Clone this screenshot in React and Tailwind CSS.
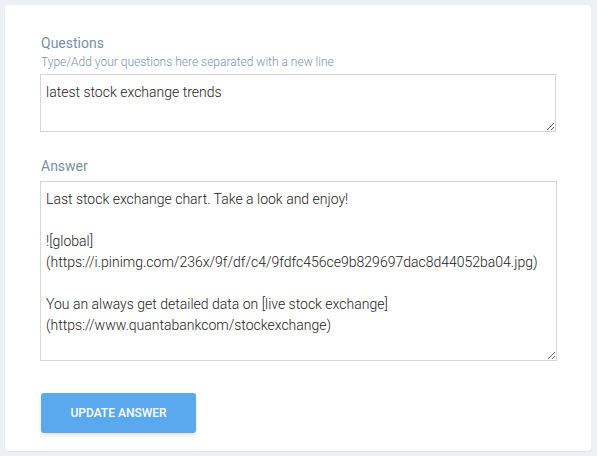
import React from "react";

export default function App() {
  const answer =
    "Last stock exchange chart. Take a look and enjoy!\n\n![global]\n(https://i.pinimg.com/236x/9f/df/c4/9fdfc456ce9b829697dac8d44052ba04.jpg)\n\nYou an always get detailed data on [live stock exchange]\n(https://www.quantabankcom/stockexchange)";
  return (
    <div className="min-h-screen bg-[#eef0f4] p-[5px] font-['Roboto',sans-serif]">
      <div className="w-[586px] h-[446px] bg-white rounded-[4px] shadow-[0_1px_2px_rgba(0,0,0,0.06)] pl-[35px] pt-[30px] flex flex-col">
        <label className="text-[14px] leading-[16px] font-normal text-[#7890a6] ml-[1px]">Questions</label>
        <div className="mt-[3px] text-[12px] leading-[16px] font-light text-[#7b93a9] ml-[1px]">
          Type/Add your questions here separated with a new line
        </div>
        <textarea
          defaultValue="latest stock exchange trends"
          className="mt-[4px] w-[516px] h-[58px] border border-[#d6d6d6] px-[5px] pt-[7px] text-[14px] leading-[21px] font-light text-[#222] outline-none font-['Roboto',sans-serif]"
        />
        <label className="mt-[26px] text-[14px] leading-[16px] font-normal text-[#7890a6] ml-[1px]">Answer</label>
        <textarea
          defaultValue={answer}
          className="mt-[7px] w-[517px] h-[180px] border border-[#d6d6d6] px-[5px] pt-[7px] text-[14px] leading-[21px] font-light text-[#222] outline-none font-['Roboto',sans-serif]"
        />
        <button className="mt-[32px] ml-[1px] w-[155px] h-[40px] rounded-[3px] bg-[#5aa9ee] text-white text-[12px] font-medium uppercase shadow-[0_2px_4px_rgba(0,0,0,0.12)]">
          Update Answer
        </button>
      </div>
    </div>
  );
}
